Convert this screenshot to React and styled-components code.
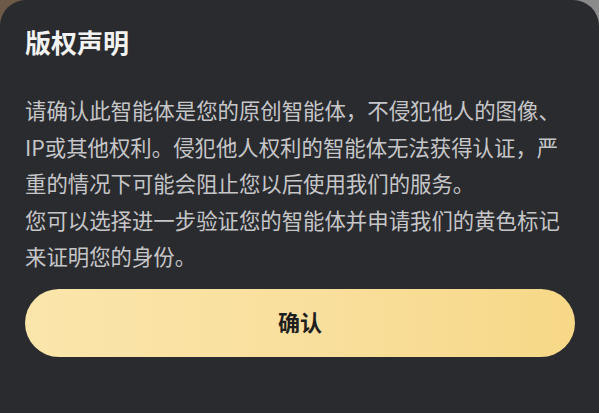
import styled, { createGlobalStyle } from 'styled-components';

const GlobalStyle = createGlobalStyle`
  html, body {
    margin: 0;
    padding: 0;
    height: 100%;
  }
  body {
    background: linear-gradient(90deg, #6e5a46 0%, #5a544e 50%, #8c8c8c 100%);
    font-family: "Noto Sans CJK SC", "Noto Sans", sans-serif;
    overflow: hidden;
  }
  #root {
    height: 100%;
  }
`;

const Sheet = styled.div`
  box-sizing: border-box;
  height: 413px;
  background: #2a2b2f;
  border-radius: 26px 26px 0 0;
  padding: 24px 25px 0 25px;
  display: flex;
  flex-direction: column;
`;

const Title = styled.h2`
  margin: 0;
  font-size: 26px;
  line-height: 36px;
  font-weight: 700;
  color: #f2f2f3;
`;

const Body = styled.p`
  margin: 32px 0 0 0;
  width: 549px;
  font-size: 21.4px;
  line-height: 36.6px;
  color: #c6c6c8;
`;

const ConfirmButton = styled.button`
  margin-top: 14px;
  width: 550px;
  height: 68px;
  padding: 0 0 4px 0;
  border: none;
  border-radius: 34px;
  background: linear-gradient(90deg, #fae5ab 0%, #f9df9c 55%, #f7d887 100%);
  color: #1e1e1e;
  font-family: inherit;
  font-size: 22px;
  font-weight: 700;
  cursor: pointer;
`;

export default function App() {
  return (
    <>
      <GlobalStyle />
      <Sheet>
        <Title>版权声明</Title>
        <Body>
          请确认此智能体是您的原创智能体，不侵犯他人的图像、IP或其他权利。侵犯他人权利的智能体无法获得认证，严重的情况下可能会阻止您以后使用我们的服务。
          <br />
          您可以选择进一步验证您的智能体并申请我们的黄色标记来证明您的身份。
        </Body>
        <ConfirmButton>确认</ConfirmButton>
      </Sheet>
    </>
  );
}
